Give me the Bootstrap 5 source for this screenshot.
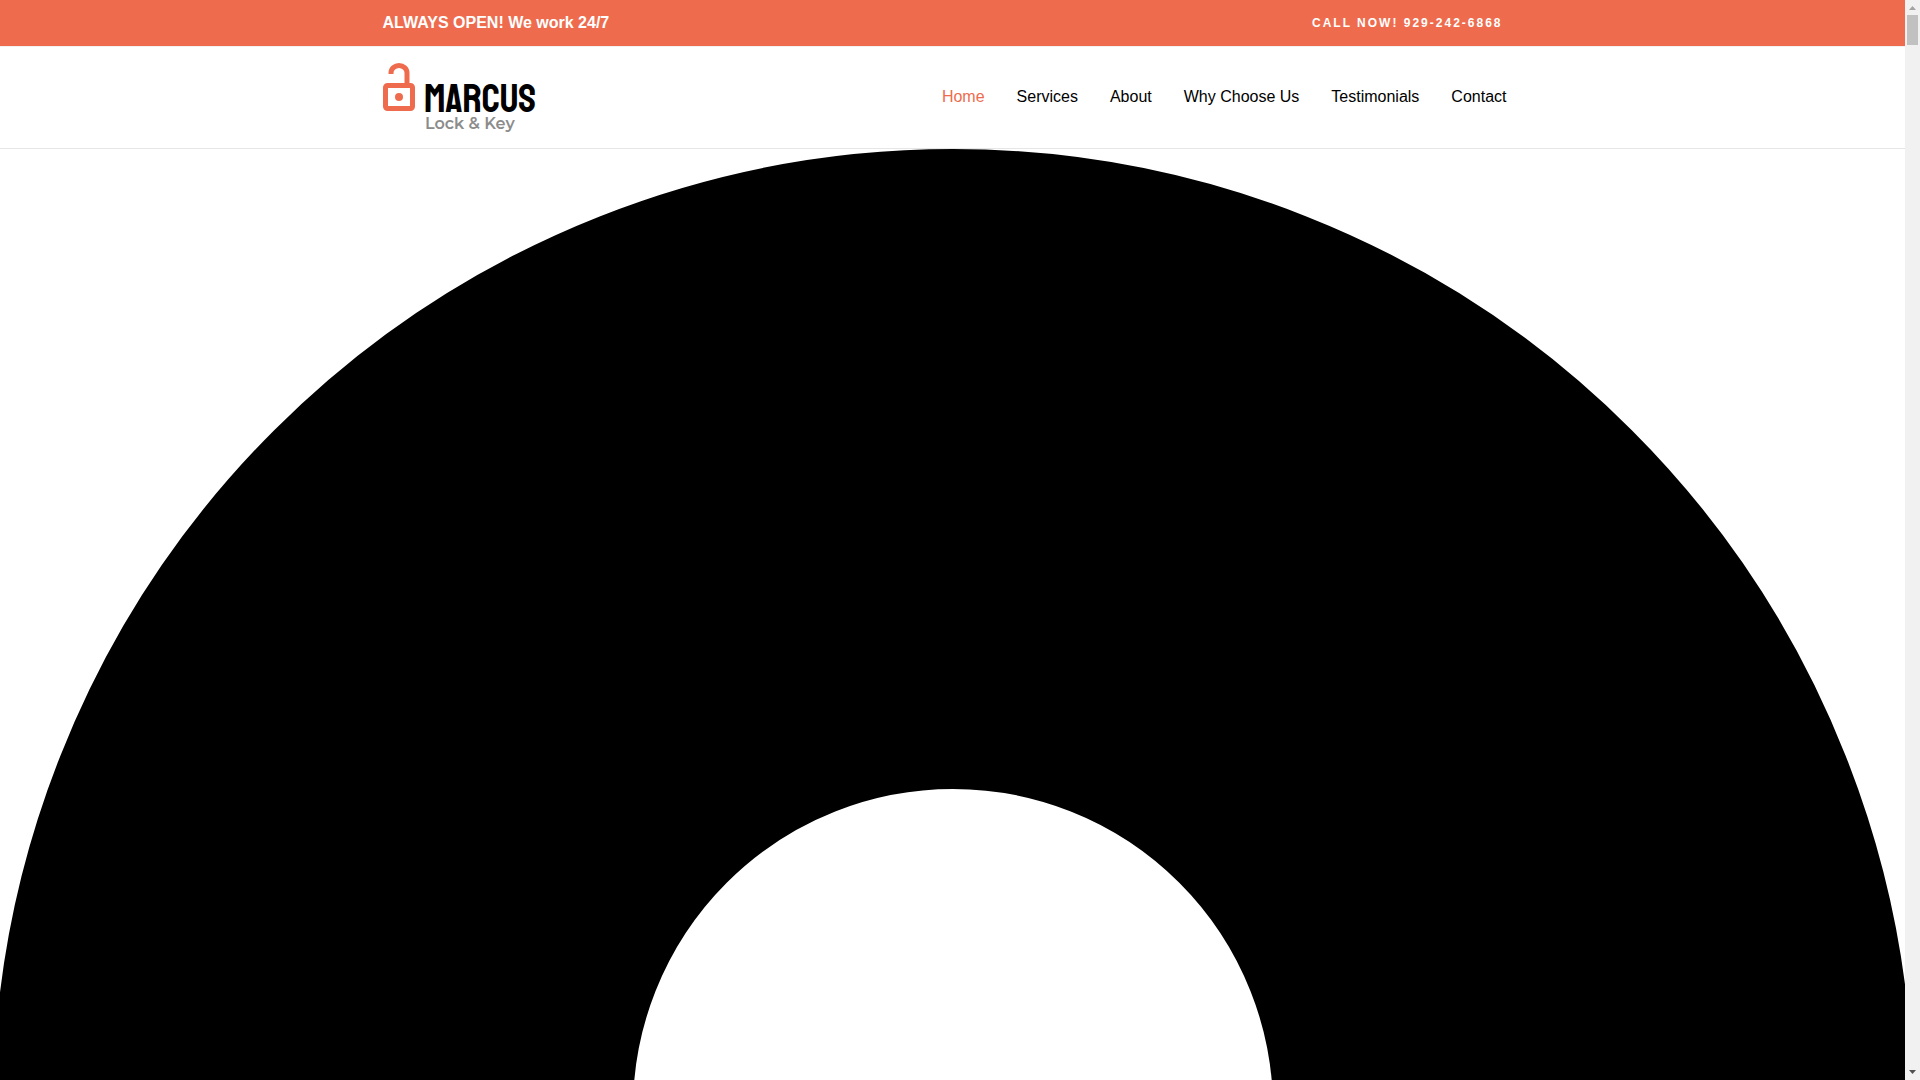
<!DOCTYPE html>
<html lang="en">
<head>
<meta charset="utf-8">
<meta name="viewport" content="width=device-width, initial-scale=1">
<title>Marcus Lock &amp; Key</title>
<link rel="stylesheet" href="https://cdn.jsdelivr.net/npm/bootstrap@5.3.0/dist/css/bootstrap.min.css">
<style>
  body { font-family: "Liberation Sans", Arial, sans-serif; font-size: 16px; line-height: 24px; }
  .site-width { width: 100%; max-width: 1170px; margin: 0 auto; padding: 0 15px; }
  .topbar { background: #ee6c4d; color: #fff; height: 46px; }
  .call-link { color: #fff; font-size: 12px; letter-spacing: 2px; padding: 0 20px; text-decoration: none; }
  .site-nav { --bs-navbar-padding-y: 16px; border-top: 1px solid #f2f0f0; border-bottom: 1px solid #e6e6e6; background: #fff; }
  .site-nav .navbar-brand { padding: 0; margin: 0; }
  .site-nav .navbar-nav { padding-bottom: 2px; }
  .site-nav .navbar-nav .nav-link { color: #000; padding: 8px 16px; }
  .site-nav .navbar-nav .nav-link.active { color: #ee6c4d; }
  .hero { line-height: 0; }
  .hero svg { width: 100vw; flex: none; }
  .scroll-track { width: 15px; background: #f1f1f1; }
  .scroll-thumb { width: 11px; height: 30px; background: #c1c1c1; }
</style>
<script src="https://cdn.jsdelivr.net/npm/bootstrap@5.3.0/dist/js/bootstrap.bundle.min.js"></script>
</head>
<body>
<div class="d-flex vh-100 overflow-hidden">
  <div class="flex-fill overflow-hidden">
    <div class="topbar d-flex align-items-center">
      <div class="site-width d-flex justify-content-between align-items-center">
        <strong>ALWAYS OPEN! We work 24/7</strong>
        <a class="call-link fw-bold" href="tel:9292426868">CALL NOW! 929-242-6868</a>
      </div>
    </div>
    <header>
      <nav class="navbar navbar-expand site-nav">
        <div class="site-width d-flex justify-content-between align-items-center">
          <a class="navbar-brand" href="#" aria-label="Marcus Lock and Key">
            <svg class="d-block overflow-visible" width="156" height="69" viewBox="0 0 156 69">
              <rect x="2.5" y="22.5" width="27" height="23" rx="2" fill="none" stroke="#ee6c4d" stroke-width="5"/>
              <path d="M8 11V10a8 7.500 0 0 1 16 0V21" fill="none" stroke="#ee6c4d" stroke-width="5"/>
              <circle cx="16" cy="34" r="4" fill="#ee6c4d"/>
              <text x="41" y="49" font-family="Staatliches,'Bebas Neue','Roboto Condensed',Roboto,sans-serif" font-size="40" fill="#000">MARCUS</text>
              <text x="42" y="66" font-family="Montserrat,'Open Sans',sans-serif" font-size="16" font-weight="600" fill="#8c8c8c">Lock &amp; Key</text>
            </svg>
          </a>
          <div class="navbar-nav">
            <a class="nav-link active" aria-current="page" href="#">Home</a>
            <a class="nav-link" href="#">Services</a>
            <a class="nav-link" href="#">About</a>
            <a class="nav-link" href="#">Why Choose Us</a>
            <a class="nav-link" href="#">Testimonials</a>
            <a class="nav-link" href="#">Contact</a>
          </div>
        </div>
      </nav>
    </header>
    <main class="hero d-flex justify-content-center">
      <svg viewBox="0 0 1920 1920" aria-hidden="true">
        <circle cx="960" cy="960" r="640" fill="none" stroke="#000" stroke-width="640"/>
      </svg>
    </main>
  </div>
  <div class="scroll-track d-flex flex-column align-items-center flex-shrink-0" aria-hidden="true">
    <svg width="15" height="15" viewBox="0 0 15 15"><path d="M4 10h7L7.500 6z" fill="#a3a3a3"/></svg>
    <div class="scroll-thumb"></div>
    <svg class="mt-auto" width="15" height="15" viewBox="0 0 15 15"><path d="M4 5h7L7.500 9z" fill="#505050"/></svg>
  </div>
</div>
</body>
</html>
